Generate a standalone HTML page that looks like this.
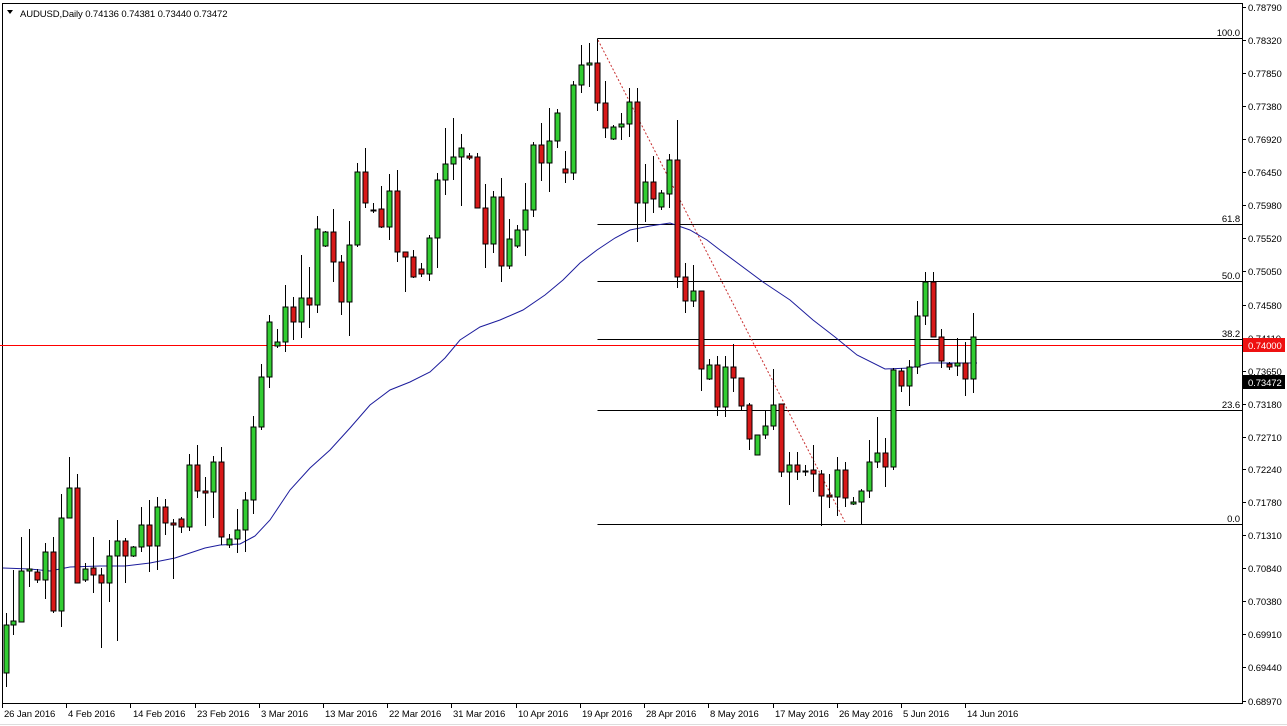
<!DOCTYPE html>
<html><head><meta charset="utf-8"><style>
html,body{margin:0;padding:0;background:#fff;}
svg{display:block;font-family:"Liberation Sans",sans-serif;font-size:9.5px;letter-spacing:-0.1px}
.g{fill:#32cd32;stroke:#000;stroke-width:1}
.r{fill:#d81818;stroke:#000;stroke-width:1}
</style></head><body>
<svg width="1287" height="726" viewBox="0 0 1287 726" xmlns="http://www.w3.org/2000/svg">
<rect width="1287" height="726" fill="#fff"/>
<path d="M2.5 3.5H1242.5V703.5H2.5Z" fill="none" stroke="#000"/>
<line x1="0" y1="724.5" x2="1287" y2="724.5" stroke="#ddd"/>
<g stroke="#000" stroke-width="1">
<path d="M597.5 38.5H1242M597.5 224.5H1242M597.5 281.5H1242M597.5 339.5H1242M597.5 410.5H1242M597.5 524.5H1242M597.5 38.5V44"/>
</g>
<g text-anchor="end" fill="#000">
<text x="1240" y="36">100.0</text><text x="1240" y="222">61.8</text><text x="1240" y="279">50.0</text><text x="1240" y="337">38.2</text><text x="1240" y="408">23.6</text><text x="1240" y="522">0.0</text>
</g>
<rect x="0" y="345" width="1242" height="1" fill="#ff0000"/>
<line x1="598" y1="40" x2="845" y2="522" stroke="#c83030" stroke-dasharray="2,2"/>
<polyline fill="none" stroke="#1c1c9c" stroke-width="1" points="3,568 30,569 50,571 70,567 100,566 125,566 150,563 175,558 190,553 205,548 220,545 240,544 255,536 270,520 290,490 310,468 330,450 350,428 370,405 390,390 410,382 430,372 445,358 460,340 480,327 500,320 523,310 545,295 563,280 580,263 597,250 615,238 630,230 650,226 670,223 690,230 707,240 720,250 763,282 790,300 813,320 835,337 857,355 885,369 910,368 930,363 950,363 977,363"/>
<path stroke="#000" stroke-width="1" fill="none" d="M6.5 613V687M13.5 570V635M21.5 537V622M29.5 529V587M37.5 569V583M45.5 543V599M53.5 537V613M61.5 494V627M69.5 457V518M77.5 474V583M85.5 563V582M93.5 537V593M101.5 568V648M109.5 540V602M117.5 520V641M125.5 538V583M133.5 546V557M141.5 507V552M149.5 500V572M157.5 497V570M165.5 499V535M173.5 519V579M181.5 517V533M189.5 454V531M197.5 445V498M205.5 477V526M213.5 456V518M221.5 447V545M229.5 534V548M237.5 509V553M245.5 492V552M253.5 416V514M261.5 364V430M269.5 315V388M277.5 329V348M285.5 285V352M293.5 297V340M301.5 255V338M309.5 267V328M317.5 216V313M325.5 231V247M333.5 209V282M341.5 255V315M349.5 221V336M357.5 163V247M365.5 148V208M373.5 203V213M381.5 186V228M389.5 174V240M397.5 170V262M405.5 252V292M413.5 250V278M421.5 263V277M429.5 235V281M437.5 173V268M445.5 128V195M453.5 118V180M461.5 134V206M469.5 153V160M477.5 153V208M485.5 184V268M493.5 191V253M501.5 178V282M509.5 219V269M517.5 225V248M525.5 183V256M533.5 142V217M541.5 123V181M549.5 108V192M557.5 109V148M565.5 151V183M573.5 81V180M581.5 45V93M589.5 43V87M597.5 39V111M605.5 81V138M613.5 125V140M621.5 113V140M629.5 88V137M637.5 88V242M645.5 164V222M653.5 156V213M661.5 190V210M669.5 154V208M677.5 120V288M685.5 263V313M693.5 265V307M701.5 291V391M709.5 359V380M717.5 356V416M725.5 356V417M733.5 344V392M741.5 378V410M749.5 403V450M757.5 435V455M765.5 410V439M773.5 369V430M781.5 404V477M789.5 452V505M797.5 452V480M805.5 465V476M813.5 445V492M821.5 470V526M829.5 474V508M837.5 457V516M845.5 462V507M853.5 497V505M861.5 489V525M869.5 440V498M877.5 417V468M885.5 438V487M893.5 368V470M901.5 368V392M909.5 360V406M917.5 301V374M925.5 272V325M933.5 272V337M941.5 329V368M949.5 362V370M957.5 338V376M965.5 342V396M973.5 313V393"/>
<g class="g">
<rect x="4" y="625" width="5" height="48"/><rect x="11" y="621" width="5" height="4"/><rect x="19" y="571" width="5" height="51"/><rect x="27" y="569" width="5" height="2"/><rect x="43" y="552" width="5" height="28"/><rect x="59" y="518" width="5" height="93"/><rect x="67" y="488" width="5" height="30"/><rect x="83" y="569" width="5" height="11"/><rect x="107" y="556" width="5" height="27"/><rect x="115" y="541" width="5" height="15"/><rect x="131" y="547" width="5" height="9"/><rect x="139" y="525" width="5" height="22"/><rect x="155" y="507" width="5" height="39"/><rect x="187" y="465" width="5" height="62"/><rect x="211" y="462" width="5" height="30"/><rect x="227" y="539" width="5" height="6"/><rect x="235" y="530" width="5" height="9"/><rect x="243" y="500" width="5" height="30"/><rect x="251" y="427" width="5" height="73"/><rect x="259" y="377" width="5" height="50"/><rect x="267" y="322" width="5" height="55"/><rect x="275" y="342" width="5" height="4"/><rect x="283" y="307" width="5" height="35"/><rect x="299" y="298" width="5" height="24"/><rect x="315" y="229" width="5" height="76"/><rect x="323" y="232" width="5" height="14"/><rect x="347" y="245" width="5" height="57"/><rect x="355" y="172" width="5" height="73"/><rect x="387" y="191" width="5" height="36"/><rect x="427" y="238" width="5" height="36"/><rect x="435" y="180" width="5" height="58"/><rect x="443" y="164" width="5" height="16"/><rect x="451" y="157" width="5" height="7"/><rect x="459" y="148" width="5" height="9"/><rect x="491" y="197" width="5" height="47"/><rect x="507" y="239" width="5" height="27"/><rect x="515" y="230" width="5" height="16"/><rect x="523" y="210" width="5" height="20"/><rect x="531" y="145" width="5" height="65"/><rect x="547" y="141" width="5" height="22"/><rect x="555" y="113" width="5" height="28"/><rect x="571" y="85" width="5" height="88"/><rect x="579" y="65" width="5" height="20"/><rect x="587" y="63" width="5" height="2"/><rect x="611" y="127" width="5" height="12"/><rect x="619" y="124" width="5" height="3"/><rect x="627" y="102" width="5" height="22"/><rect x="643" y="182" width="5" height="21"/><rect x="659" y="193" width="5" height="14"/><rect x="667" y="160" width="5" height="34"/><rect x="691" y="291" width="5" height="10"/><rect x="707" y="365" width="5" height="14"/><rect x="723" y="367" width="5" height="40"/><rect x="755" y="435" width="5" height="20"/><rect x="763" y="426" width="5" height="9"/><rect x="771" y="405" width="5" height="21"/><rect x="787" y="465" width="5" height="7"/><rect x="835" y="470" width="5" height="27"/><rect x="851" y="502" width="5" height="2"/><rect x="859" y="491" width="5" height="11"/><rect x="867" y="462" width="5" height="29"/><rect x="875" y="453" width="5" height="9"/><rect x="891" y="370" width="5" height="97"/><rect x="907" y="367" width="5" height="19"/><rect x="915" y="316" width="5" height="51"/><rect x="923" y="282" width="5" height="34"/><rect x="955" y="363" width="5" height="3"/><rect x="971" y="337" width="5" height="42"/>
</g>
<g class="r">
<rect x="35" y="572" width="5" height="8"/><rect x="51" y="552" width="5" height="59"/><rect x="75" y="488" width="5" height="95"/><rect x="91" y="568" width="5" height="7"/><rect x="99" y="575" width="5" height="8"/><rect x="123" y="541" width="5" height="15"/><rect x="147" y="525" width="5" height="21"/><rect x="163" y="507" width="5" height="16"/><rect x="171" y="523" width="5" height="2"/><rect x="179" y="519" width="5" height="8"/><rect x="195" y="465" width="5" height="26"/><rect x="203" y="491" width="5" height="2"/><rect x="219" y="462" width="5" height="75"/><rect x="291" y="307" width="5" height="15"/><rect x="307" y="298" width="5" height="7"/><rect x="331" y="232" width="5" height="30"/><rect x="339" y="262" width="5" height="40"/><rect x="363" y="172" width="5" height="31"/><rect x="371" y="210" width="5" height="1"/><rect x="379" y="209" width="5" height="18"/><rect x="395" y="191" width="5" height="61"/><rect x="403" y="252" width="5" height="5"/><rect x="411" y="257" width="5" height="20"/><rect x="419" y="269" width="5" height="5"/><rect x="467" y="156" width="5" height="2"/><rect x="475" y="157" width="5" height="51"/><rect x="483" y="208" width="5" height="36"/><rect x="499" y="197" width="5" height="69"/><rect x="539" y="145" width="5" height="18"/><rect x="563" y="169" width="5" height="4"/><rect x="595" y="63" width="5" height="40"/><rect x="603" y="103" width="5" height="25"/><rect x="635" y="102" width="5" height="101"/><rect x="651" y="182" width="5" height="17"/><rect x="675" y="160" width="5" height="117"/><rect x="683" y="277" width="5" height="24"/><rect x="699" y="291" width="5" height="78"/><rect x="715" y="365" width="5" height="42"/><rect x="731" y="367" width="5" height="11"/><rect x="739" y="378" width="5" height="28"/><rect x="747" y="405" width="5" height="34"/><rect x="779" y="404" width="5" height="68"/><rect x="795" y="465" width="5" height="7"/><rect x="803" y="471" width="5" height="1"/><rect x="811" y="470" width="5" height="4"/><rect x="819" y="474" width="5" height="22"/><rect x="827" y="495" width="5" height="2"/><rect x="843" y="470" width="5" height="28"/><rect x="883" y="453" width="5" height="14"/><rect x="899" y="371" width="5" height="15"/><rect x="931" y="282" width="5" height="55"/><rect x="939" y="337" width="5" height="24"/><rect x="947" y="364" width="5" height="3"/><rect x="963" y="363" width="5" height="16"/>
</g>
<path d="M7 10H13L10 14Z" fill="#000"/>
<text x="20" y="17" fill="#000">AUDUSD,Daily  0.74136 0.74381 0.73440 0.73472</text>
<path stroke="#000" d="M1242 7.5h4M1242 40.5h4M1242 73.5h4M1242 106.5h4M1242 139.5h4M1242 172.5h4M1242 205.5h4M1242 238.5h4M1242 271.5h4M1242 305.5h4M1242 338.5h4M1242 371.5h4M1242 404.5h4M1242 437.5h4M1242 469.5h4M1242 502.5h4M1242 535.5h4M1242 568.5h4M1242 601.5h4M1242 634.5h4M1242 667.5h4M1242 701.5h4"/>
<g fill="#000">
<text x="1248" y="11">0.78790</text><text x="1248" y="44">0.78320</text><text x="1248" y="77">0.77850</text><text x="1248" y="110">0.77380</text><text x="1248" y="143">0.76920</text><text x="1248" y="176">0.76450</text><text x="1248" y="209">0.75980</text><text x="1248" y="242">0.75520</text><text x="1248" y="275">0.75050</text><text x="1248" y="309">0.74580</text><text x="1248" y="342">0.74110</text><text x="1248" y="375">0.73650</text><text x="1248" y="408">0.73180</text><text x="1248" y="441">0.72710</text><text x="1248" y="473">0.72240</text><text x="1248" y="506">0.71780</text><text x="1248" y="539">0.71310</text><text x="1248" y="572">0.70840</text><text x="1248" y="605">0.70380</text><text x="1248" y="638">0.69910</text><text x="1248" y="671">0.69440</text><text x="1248" y="705">0.68970</text>
</g>
<rect x="1243" y="338" width="42" height="14" fill="#ee1111"/>
<text x="1248" y="349" fill="#fff">0.74000</text>
<rect x="1243" y="375" width="42" height="14" fill="#000"/>
<text x="1248" y="386" fill="#fff">0.73472</text>
<path stroke="#000" d="M2.5 703v5M66.5 703v5M130.5 703v5M195.5 703v5M259.5 703v5M323.5 703v5M387.5 703v5M451.5 703v5M516.5 703v5M580.5 703v5M644.5 703v5M708.5 703v5M773.5 703v5M837.5 703v5M901.5 703v5M965.5 703v5"/>
<g fill="#000">
<text x="4" y="717">26 Jan 2016</text><text x="68" y="717">4 Feb 2016</text><text x="133" y="717">14 Feb 2016</text><text x="197" y="717">23 Feb 2016</text><text x="261" y="717">3 Mar 2016</text><text x="325" y="717">13 Mar 2016</text><text x="389" y="717">22 Mar 2016</text><text x="453" y="717">31 Mar 2016</text><text x="518" y="717">10 Apr 2016</text><text x="582" y="717">19 Apr 2016</text><text x="646" y="717">28 Apr 2016</text><text x="710" y="717">8 May 2016</text><text x="775" y="717">17 May 2016</text><text x="839" y="717">26 May 2016</text><text x="903" y="717">5 Jun 2016</text><text x="967" y="717">14 Jun 2016</text>
</g>
</svg>
</body></html>
